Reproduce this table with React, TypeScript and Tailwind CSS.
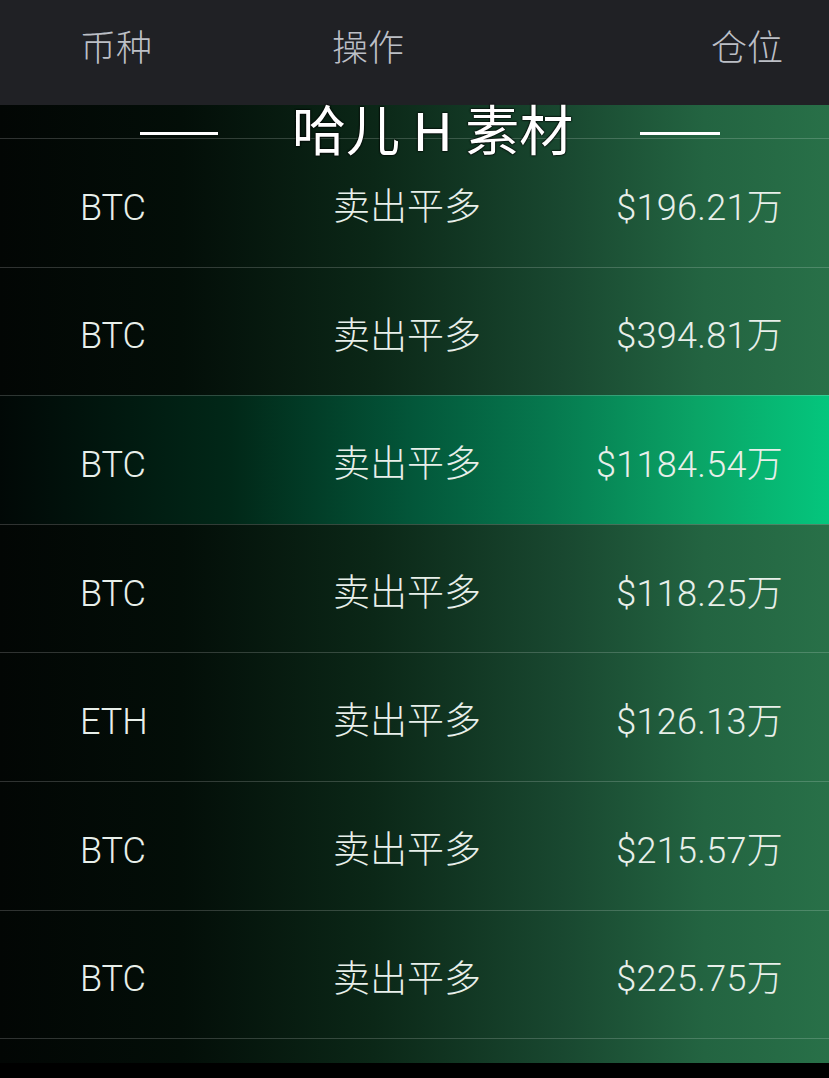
import React from "react";

type Row = {
	coin: string;
	action: string;
	size: string;
	hot?: boolean;
};

const rows: Row[] = [
	{ coin: "BTC", action: "卖出平多", size: "$196.21万" },
	{ coin: "BTC", action: "卖出平多", size: "$394.81万" },
	{ coin: "BTC", action: "卖出平多", size: "$1184.54万", hot: true },
	{ coin: "BTC", action: "卖出平多", size: "$118.25万" },
	{ coin: "ETH", action: "卖出平多", size: "$126.13万" },
	{ coin: "BTC", action: "卖出平多", size: "$215.57万" },
	{ coin: "BTC", action: "卖出平多", size: "$225.75万" },
];

const font = "font-['Roboto','Noto_Sans_CJK_SC',sans-serif]";

const App = () => {
	return (
		<div className={`w-[829px] h-[1078px] bg-black flex flex-col ${font}`}>
			{/* header */}
			<div className="h-[105px] bg-[#202125] flex items-center pb-[8px] pl-[80px] pr-[46px] text-[36px] font-light text-[#bcbfc6]">
				<span className="w-[252px]">币种</span>
				<span className="flex-1">操作</span>
				<span>仓位</span>
			</div>

			{/* list */}
			<div className="relative h-[958px] bg-[linear-gradient(to_right,#020604_0%,#030e08_22%,#0b2717_45%,#194830_68%,#236441_85%,#287048_100%)] flex flex-col">
				<div className="h-[33px]" />
				{rows.map((row, i) => (
					<div
						key={i}
						className={`h-[128.6px] border-t border-white/[0.18] flex items-center pt-[10px] pl-[80px] pr-[46px] text-[36px] font-light text-[#e8efea] ${
							row.hot
								? "bg-[linear-gradient(to_right,#010806_0%,#012818_28%,#03573a_50%,#06784e_66%,#0aa466_84%,#04c67d_100%)]"
								: ""
						}`}
					>
						<span className="w-[253px]">{row.coin}</span>
						<span className="flex-1 text-[37px]">{row.action}</span>
						<span className="tracking-[0.3px]">{row.size}</span>
					</div>
				))}
				<div className="flex-1 border-t border-white/[0.18]" />

				{/* watermark */}
				<div className="absolute top-[1px] left-0 right-0 flex items-center pl-[140px] pointer-events-none">
					<div className="w-[78px] h-[3px] bg-white" />
					<span className="ml-[74px] mr-[67px] text-[54px] leading-none text-white font-normal [text-shadow:0_0_2px_#000,0_0_2px_#000,0_0_1px_#000]">
						哈儿 H 素材
					</span>
					<div className="w-[80px] h-[3px] bg-white" />
				</div>
			</div>

			<div className="flex-1 bg-black" />
		</div>
	);
};

export default App;
